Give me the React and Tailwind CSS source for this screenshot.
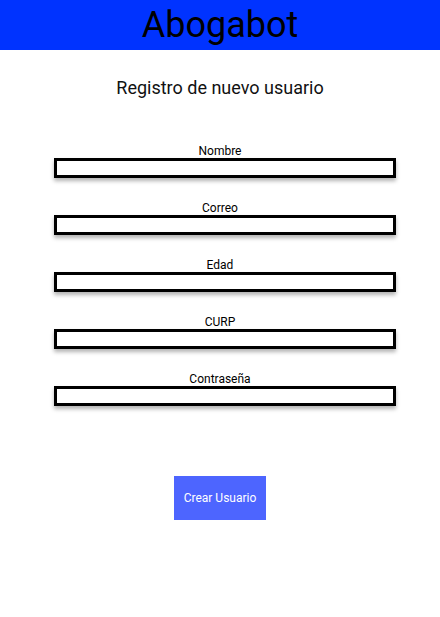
const fields = ['Nombre', 'Correo', 'Edad', 'CURP', 'Contraseña']

export default function App() {
  return (
    <div className="w-[440px] h-[617px] bg-white font-['Roboto',sans-serif] text-black">
      {/* header */}
      <div className="h-[50px] bg-[#0033ff] flex items-center justify-center">
        <h1 className="text-[36px] leading-none font-normal">Abogabot</h1>
      </div>

      <h2 className="mt-[27px] text-center text-[18px] leading-[22px] text-[#111]">
        Registro de nuevo usuario
      </h2>

      <div className="mt-[45px] flex flex-col gap-[23px]">
        {fields.map((f) => (
          <div key={f} className="flex flex-col">
            <label className="text-center text-[12px] leading-[14px]">{f}</label>
            <input
              type={f === 'Contraseña' ? 'password' : 'text'}
              className="ml-[54px] w-[342px] h-[20px] border-[3px] border-black bg-white outline-none shadow-[0_3px_4px_rgba(0,0,0,0.3)]"
            />
          </div>
        ))}
      </div>

      <div className="mt-[70px] flex justify-center">
        <button className="w-[92px] h-[44px] bg-[#4d65ff] text-white text-[12px]">
          Crear Usuario
        </button>
      </div>
    </div>
  )
}
